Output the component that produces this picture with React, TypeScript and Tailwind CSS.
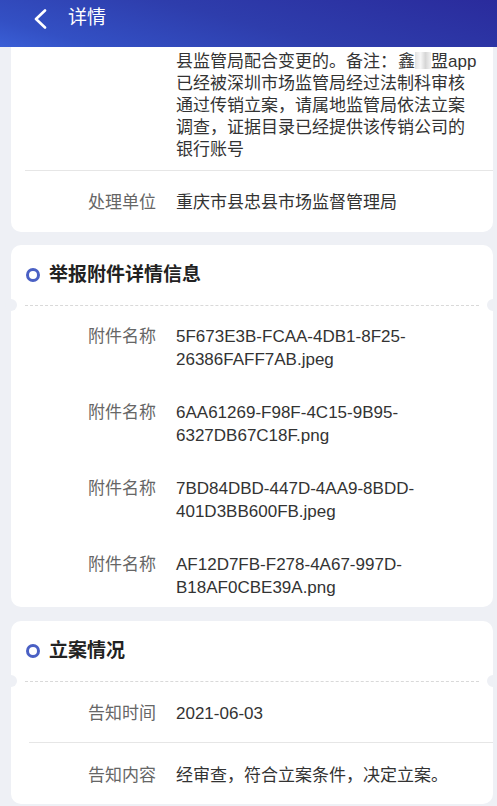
import React from "react";

const FONT = { fontFamily: '"Liberation Sans", "Noto Sans CJK SC", sans-serif' };

function Circle() {
  return <span className="inline-block w-[14px] h-[14px] rounded-full border-[3.5px] border-[#4a60c4] shrink-0" />;
}

function CardHeader({ title }: { title: string }) {
  return (
    <>
      <div className="h-[60px] flex items-center pl-[15px] gap-[9px]">
        <Circle />
        <span className="text-[19px] font-bold text-[#222]">{title}</span>
      </div>
      <div className="relative h-px">
        <div className="mx-[14px] border-t border-dashed border-[#d9d9d9]" />
        <span className="absolute left-[-6px] top-[-6px] w-[12px] h-[12px] rounded-full bg-[#eef0f5]" />
        <span className="absolute right-[-6px] top-[-6px] w-[12px] h-[12px] rounded-full bg-[#eef0f5]" />
      </div>
    </>
  );
}

function Row({ label, children, className = "", lh = "leading-[22px]" }: { label: string; children: React.ReactNode; className?: string; lh?: string }) {
  return (
    <div className={`flex text-[17px] ${lh} ${className}`}>
      <div className="w-[145px] shrink-0 text-right text-[#666]">{label}</div>
      <div className="ml-[20px] flex-1 text-[#333] pr-[8px]">{children}</div>
    </div>
  );
}

export default function App() {
  const files = [
    ["5F673E3B-FCAA-4DB1-8F25-", "26386FAFF7AB.jpeg"],
    ["6AA61269-F98F-4C15-9B95-", "6327DB67C18F.png"],
    ["7BD84DBD-447D-4AA9-8BDD-", "401D3BB600FB.jpeg"],
    ["AF12D7FB-F278-4A67-997D-", "B18AF0CBE39A.png"],
  ];
  return (
    <div style={FONT} className="w-[497px] h-[806px] overflow-hidden bg-[#eef0f5]">
      <div className="h-[47px] flex items-center pb-[10px] bg-[linear-gradient(195deg,#2a2b9c_0%,#2e3dac_50%,#3350c4_85%,#3a5fd6_100%)]">
        <svg width="14" height="20" viewBox="0 0 14 20" className="ml-[33px]">
          <path d="M12 1.5 L3 10 L12 18.5" fill="none" stroke="white" strokeWidth="2.6" strokeLinecap="round" strokeLinejoin="round" />
        </svg>
        <span className="ml-[21px] text-[19px] text-white">详情</span>
      </div>

      <div className="ml-[11px] mr-[4px] bg-white rounded-b-[10px]">
        <Row label="" className="pt-[4px] pb-[9px]">
          <div className="whitespace-nowrap">
            {"县监管局配合变更的。备注："}
            <span className="inline-block w-[1px]" />
            {"鑫"}
            <span className="inline-block w-[16px] h-[17px] align-[-2px] bg-[linear-gradient(90deg,#e2e2e2,#f7f7f7_35%,#d6d6d6_65%,#f3f3f3)]" />
            {"盟app"}
          </div>
          <div>已经被深圳市场监管局经过法制科审核</div>
          <div>通过传销立案，请属地监管局依法立案</div>
          <div>调查，证据目录已经提供该传销公司的</div>
          <div>银行账号</div>
        </Row>
        <div className="ml-[14px] border-t border-[#e6e6e6]" />
        <Row label="处理单位" className="pt-[21px] pb-[18px]">
          重庆市县忠县市场监督管理局
        </Row>
      </div>

      <div className="mt-[13px] ml-[11px] mr-[4px] bg-white rounded-[10px]">
        <CardHeader title="举报附件详情信息" />
        <div className="flex flex-col gap-[30px] pt-[19px] pb-[8px]">
          {files.map((f, i) => (
            <Row key={i} label="附件名称" lh="leading-[23px]">
              <div>{f[0]}</div>
              <div>{f[1]}</div>
            </Row>
          ))}
        </div>
      </div>

      <div className="mt-[14px] ml-[11px] mr-[4px] bg-white rounded-[10px]">
        <CardHeader title="立案情况" />
        <Row label="告知时间" className="pt-[21px] pb-[17px]">
          2021-06-03
        </Row>
        <div className="ml-[18px] border-t border-[#e6e6e6]" />
        <Row label="告知内容" className="pt-[22px] pb-[17px]">
          经审查，符合立案条件，决定立案。
        </Row>
      </div>
    </div>
  );
}
